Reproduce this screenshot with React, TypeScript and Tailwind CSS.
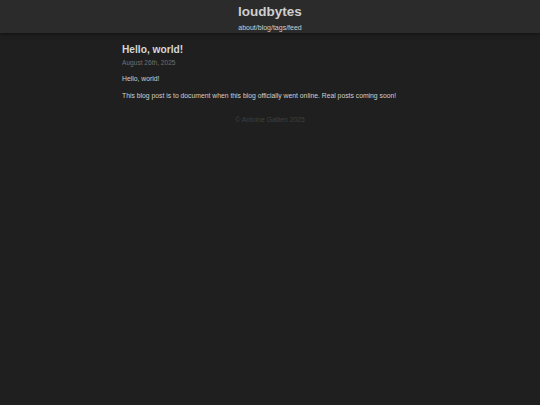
export default function App() {
  return (
    <div className="min-h-[405px] bg-[#1f1f1f] font-['Liberation_Sans',Arial,sans-serif] text-[#d4d4d4]">
      {/* Header */}
      <header className="h-[33px] bg-[#2b2b2b] shadow-[0_1px_4px_rgba(0,0,0,0.5)] flex flex-col items-center pt-[3px]">
        <h1 className="text-[13.5px] font-bold leading-[17px] text-[#cfcfcf]">loudbytes</h1>
        <nav className="mt-[3px] text-[7px] leading-[9px] text-[#cfcfcf]">
          <a href="#">about</a>/<a href="#">blog</a>/<a href="#">tags</a>/<a href="#">feed</a>
        </nav>
      </header>

      {/* Post */}
      <main className="w-[296px] mx-auto pt-[10px]">
        <h2 className="text-[10.2px] font-bold leading-[14px] text-[#d6d6d6]">Hello, world!</h2>
        <p className="mt-[1px] text-[6.6px] leading-[9px] text-[#6f6f6f]">August 26th, 2025</p>
        <p className="mt-[7px] text-[6.8px] leading-[9px] text-[#cfcfcf]">Hello, world!</p>
        <p className="mt-[8px] text-[6.8px] leading-[9px] text-[#cfcfcf] whitespace-nowrap">
          This blog post is to document when this blog officially went online. Real posts coming soon!
        </p>
        <footer className="mt-[15px] text-center text-[6.8px] leading-[9px] text-[#3f3f3f]">
          © Antoine Gallien 2025
        </footer>
      </main>
    </div>
  );
}
